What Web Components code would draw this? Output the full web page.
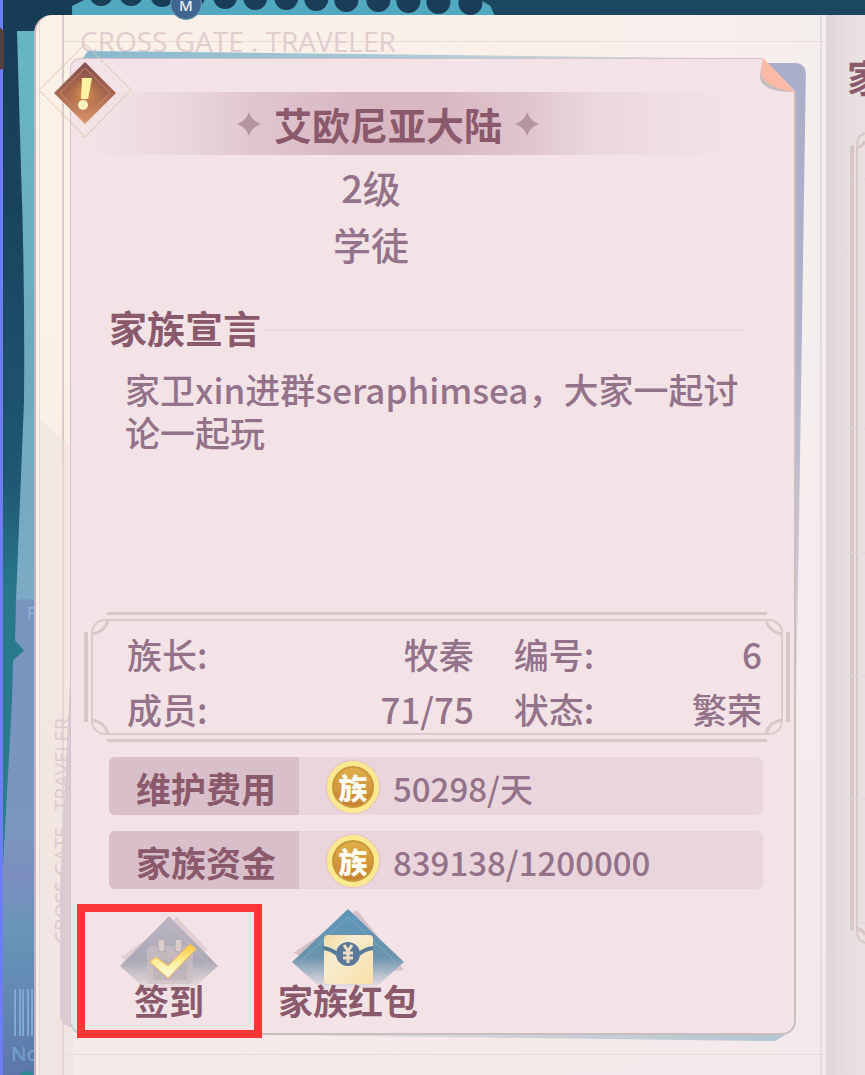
<!DOCTYPE html>
<html lang="zh-CN">
<head>
<meta charset="utf-8">
<meta name="viewport" content="width=device-width, initial-scale=1">
<title>家族</title>
<style>
  html { background: #1a4059; }
  body {
    margin: 0;
    font-family: "Noto Sans CJK SC", "Noto Sans", sans-serif;
    font-weight: 500;
    color: #94738a;
    --strong: #8a5a6c;
    --line: #dccaca;
    --paper: #f3e3e6;
  }
</style>
</head>
<body>
<guild-page>
  <side-page slot="side">家</side-page>
  <guild-card>
    <title-band slot="title">艾欧尼亚大陆</title-band>
    <span slot="rank">2级</span>
    <span slot="rank">学徒</span>
    <guild-motto heading="家族宣言">家卫xin进群seraphimsea，大家一起讨论一起玩</guild-motto>
    <ornate-frame>
      <fact-list></fact-list>
    </ornate-frame>
    <money-row label="维护费用">50298/天</money-row>
    <money-row label="家族资金">839138/1200000</money-row>
    <guild-action slot="action" marked>
      <svg slot="icon" width="116" height="80" viewBox="0 0 116 80" aria-hidden="true">
        <defs>
          <linearGradient id="ga" x1="0" y1="0" x2="0" y2="1"><stop offset=".1" stop-color="#b9b3c2"/><stop offset=".6" stop-color="#aaa9b5"/><stop offset="1" stop-color="#f3e3e6"/></linearGradient>
          <linearGradient id="gc" x1="0" y1="0" x2="0" y2="1"><stop offset="0" stop-color="#ffc83a"/><stop offset=".6" stop-color="#fff3a8"/><stop offset="1" stop-color="#fffbe2"/></linearGradient>
        </defs>
        <path d="M66 8 97 41 62 66 9 49Z" fill="#dcc8d0" opacity=".8"/>
        <path d="M58 7 107 57 79 82H37L9 57Z" fill="url(#ga)"/>
        <path d="M58 14 99 56 85 69" fill="none" stroke="#c6c3cf" opacity=".6"/>
        <rect x="36" y="37" width="46" height="38" rx="5" fill="#cdbfc1" opacity=".7"/>
        <rect x="42" y="51" width="34" height="20" fill="#b6adb6" opacity=".6"/>
        <rect x="47" y="30" width="7" height="13" rx="3" fill="#d9ccc9" stroke="#aaa8b0"/>
        <rect x="64" y="30" width="7" height="13" rx="3" fill="#d9ccc9" stroke="#aaa8b0"/>
        <path d="M39 53 45 48 57 57 79 35 85 40 57 69Z" fill="url(#gc)" stroke="#f9b64c" stroke-width="1"/>
      </svg>
      签到
    </guild-action>
    <guild-action slot="action">
      <svg slot="icon" width="116" height="80" viewBox="0 0 116 80" aria-hidden="true">
        <defs>
          <linearGradient id="gb" x1="0" y1="0" x2="0" y2="1"><stop offset="0" stop-color="#5d97bb"/><stop offset=".6" stop-color="#6a93ad"/><stop offset="1" stop-color="#f3e3e6"/></linearGradient>
          <linearGradient id="ge" x1="0" y1="0" x2="1" y2="1"><stop offset="0" stop-color="#f0dca0"/><stop offset=".35" stop-color="#f8ecd0"/><stop offset="1" stop-color="#f7dfa6"/></linearGradient>
        </defs>
        <path d="M67 1 114 61 60 66 3 44Z" fill="#cfb4bf" opacity=".75"/>
        <path d="M58 0 114 53 84 80H32L2 53Z" fill="url(#gb)"/>
        <path d="M58 8 106 53 94 64M58 8 10 53 22 64" fill="none" stroke="#8db4c9" opacity=".7"/>
        <rect x="34" y="26" width="49" height="49" rx="4" fill="url(#ge)"/>
        <path d="M33 39Q41 40 47 45M83 39Q75 40 69 45" fill="none" stroke="#557b98" stroke-width="4"/>
        <circle cx="58" cy="45" r="12" fill="#58799a"/>
        <path d="M54 36 58 42 62 36M53 44H63M53 49H63M58 42V54" fill="none" stroke="#efdcc2" stroke-width="3"/>
      </svg>
      家族红包
    </guild-action>
  </guild-card>
</guild-page>

<script>
const define = (name, html, setup) => {
  const tpl = document.createElement('template');
  tpl.innerHTML = html;
  customElements.define(name, class extends HTMLElement {
    constructor() {
      super();
      this.attachShadow({ mode: 'open' }).append(tpl.content.cloneNode(true));
    }
    connectedCallback() { if (setup) setup(this, this.shadowRoot); }
  });
};

/* Sea-coloured backdrop with the ticket edges */
const bites = [[101,5],[131,5],[162,6],[193,7],[225,8],[255,9],[286,9],[316,10],[346,11],[378,11],[408,12],[438,13],[470,14]]
  .map(([x, b]) => `<circle cx="${x}" cy="${b - 11}" r="12" fill="#1a3e58"/>`).join('');
define('scene-backdrop', `
<style>
  :host { display: block; overflow: hidden; }
  svg { display: block; width: 100%; height: 100%; }
  text { font-family: "Noto Sans", sans-serif; }
</style>
<svg viewBox="0 0 865 1075" preserveAspectRatio="xMinYMin slice" aria-hidden="true">
  <defs>
    <linearGradient id="sea" x1="0" y1="0" x2="0" y2="1"><stop offset="0" stop-color="#173b55"/><stop offset=".2" stop-color="#19445f"/><stop offset=".45" stop-color="#1f5874"/><stop offset=".55" stop-color="#28788a"/><stop offset="1" stop-color="#2b8290"/></linearGradient>
    <linearGradient id="tic" x1="0" y1="0" x2="0" y2="1"><stop offset="0" stop-color="#66b7c2"/><stop offset=".6" stop-color="#6fa9bf"/><stop offset="1" stop-color="#7cabc5"/></linearGradient>
    <linearGradient id="low" x1="0" y1="0" x2="0" y2="1"><stop offset="0" stop-color="#7894bf"/><stop offset=".5" stop-color="#7a95be"/><stop offset=".58" stop-color="#7c8fbf"/><stop offset=".7" stop-color="#6796b9"/><stop offset="1" stop-color="#5c76aa"/></linearGradient>
  </defs>
  <rect width="865" height="1075" fill="url(#sea)"/>
  <rect x="480" width="385" height="15" fill="#1c4760"/>
  <path d="M72 15V6L84 0H480L490 6 494 15Z" fill="#51a9bf"/>
  ${bites}
  <path d="M17 31H40V600H16Q20 500 24 400Q25 280 21 170Z" fill="url(#tic)"/>
  <path d="M16 599H40V1075H3V865L12 700 13 660 24 650 15 640Z" fill="url(#low)"/>
  <text x="27" y="618" font-size="16" fill="#8fb4d2">F</text>
  <path d="M15 988V1035M20 988V1035M23 988V1035M28 988V1035M32 988V1035" stroke="#7fabd0" stroke-width="2"/>
  <text x="11" y="1060" font-size="20" fill="#739fc7">No</text>
  <circle cx="26" cy="1078" r="8" fill="#2d8994"/>
  <rect width="3" height="1075" fill="#6c7df6"/>
  <path d="M0 27 4 32V68L0 70Z" fill="#54413f"/>
</svg>`);

define('guild-page', `
<style>
  :host { display: block; position: relative; min-height: 100vh; overflow: hidden; box-sizing: border-box; padding: 15px 0 0 34px; }
  scene-backdrop { position: absolute; inset: 0; }
  .badge {
    position: absolute; z-index: 2; left: 170px; top: -12px; box-sizing: border-box; width: 32px; height: 32px; padding-top: 10px;
    border: 1px solid #6fa0b8; border-radius: 50%;
    background: #40658f; color: #eef3f8; font: 500 15px/12px "Noto Sans", sans-serif; text-align: center;
  }
  .spread { position: relative; display: grid; grid-template-columns: minmax(0, 1fr) 39px; min-height: calc(100vh - 15px); }
  main {
    position: relative; display: flow-root; box-sizing: border-box; padding: 0 30px 41px 34px;
    border-left: 2px solid #cbb4b9; border-radius: 18px 0 0 0;
    background:
      linear-gradient(#e6d9dc, #e6d9dc) 3px 0 / 1px 100% no-repeat,
      linear-gradient(#d9cacb, #d9cacb) 26px 0 / 2px 100% no-repeat,
      linear-gradient(#e6dbe4, #e6dbe4) right 4px top 0 / 2px 100% no-repeat,
      linear-gradient(#e9ddd9, #e9ddd9) 28px 26px / 100% 1px no-repeat,
      linear-gradient(#e8dad9, #e8dad9) 28px 1039px / 100% 1px no-repeat,
      linear-gradient(#f2e6ea00 30%, #f2e6ea99),
      linear-gradient(to right, #fcf1e7 0, #faf0ea 60%, #f5eeee 100%);
  }
  main::before {
    content: ""; position: absolute; left: 4px; top: 405px; bottom: 0; width: 33px;
    background: #ecdfdd; opacity: .5; clip-path: polygon(0 0, 100% 28px, 100% 100%, 0 100%);
  }
  .brand {
    margin: 0; padding: 8px 0 0 10px; height: 35px; color: #e0cdd0;
    font: 400 28px/36px "Open Sans", "Noto Sans", sans-serif; white-space: nowrap;
  }
  .spine {
    position: absolute; left: 16px; bottom: 132px; margin: 0; color: #dccbcc; writing-mode: vertical-rl; transform: rotate(180deg);
    font: 400 20px/20px "Open Sans", "Noto Sans", sans-serif; white-space: nowrap;
  }
</style>
<scene-backdrop></scene-backdrop>
<span class="badge">M</span>
<div class="spread">
  <main>
    <p class="brand">CROSS GATE . TRAVELER</p>
    <p class="spine">CROSS GATE . TRAVELER</p>
    <slot></slot>
  </main>
  <slot name="side"></slot>
</div>`);

define('side-page', `
<style>
  :host { display: block; overflow: hidden; padding: 33px 0 0 21px; box-sizing: border-box; white-space: nowrap;
    background: linear-gradient(to right, #dfd6dc, #e9e0e2 70%); }
  h2 { margin: 0; font-size: 38px; line-height: 56px; font-weight: 700; color: var(--strong); }
  svg { display: block; margin: 26px 0 0 1px; }
</style>
<h2><slot></slot></h2>
<svg width="17" height="820" viewBox="0 0 17 820" fill="none" aria-hidden="true">
  <path d="M3 17H4V799H3" stroke="#d8c5c6" stroke-width="4"/>
  <path d="M9 803V16Q9 4 18 3M9 803Q10 811 17 813" stroke="#d8c8c8" stroke-width="2"/>
  <path d="M9 18Q15 16 17 11M9 798Q15 800 17 805" stroke="#d8c5c6" stroke-width="3"/>
  <path d="M0 49H17M0 174H17M0 299H17M0 423H17M0 546H17M0 669H17M0 793H17" stroke="#dcd6db"/>
</svg>`);

define('guild-card', `
<style>
  :host { display: block; position: relative; }
  .shade { position: absolute; left: -10px; top: 500px; bottom: 8px; width: 16px; border-radius: 0 0 0 12px; background: #dacbd3; clip-path: polygon(100% 0, 100% 100%, 0 100%, 0 70%); }
  .blue { position: absolute; right: -10px; top: 5px; width: 50px; height: 660px; background: linear-gradient(#abaec8, #adb1ca 40%, #c9c5d6 75%, #f0e6eb); border-radius: 10px 10px 0 0; clip-path: polygon(0 0, 100% 0, 80% 100%, 0 100%); }
  .top { position: absolute; left: 12px; top: -7px; right: 90px; height: 14px; background: linear-gradient(to right, #8ab8cd, #a8c8d5 50%, #e0dcd8); clip-path: polygon(0 8px, 6px 0, 30% 2px, 100% 7px, 100% 100%, 0 100%); }
  .foot { position: absolute; right: 11px; bottom: -6px; width: 520px; height: 12px; background: linear-gradient(to right, #e8dee1, #b2c5d0); clip-path: polygon(0 50%, 100% 0, 100% 50%, 98% 100%); }
  article {
    position: relative; box-sizing: border-box; padding: 33px 31px 13px 38px;
    background: var(--paper); border: 1px solid #d3c2cd; border-right: 2px solid #cdbfc0; border-bottom: 2px solid #c9bdbd; border-radius: 10px 0 14px 14px;
    clip-path: polygon(0 0, calc(100% - 34px) 0, 100% 34px, 100% calc(100% + 20px), 0 calc(100% + 20px));
  }
  .fold { position: absolute; right: 0; top: 0; }
  .bang { position: absolute; left: -33px; top: -15px; width: 96px; height: 96px; padding: 0; border: 0; background: none; }
  .rank { display: flex; flex-direction: column; align-items: center; margin: 3px 0 27px; padding-right: 130px; font-size: 38px; line-height: 57px; }
  .actions { display: flex; gap: 9px; margin: 20px 0 0 -25px; }
</style>
<div class="blue"></div><div class="top"></div><div class="foot"></div><div class="shade"></div>
<article>
  <slot name="title"></slot>
  <div class="rank"><slot name="rank"></slot></div>
  <slot></slot>
  <div class="actions"><slot name="action"></slot></div>
</article>
<svg class="fold" width="37" height="36" viewBox="0 0 37 36" aria-hidden="true">
  <path d="M3 8Q-1 20 3 25Q10 34 34 34Z" fill="#c6bdbd"/>
  <path d="M4 0Q20 16 36 34Q10 30 3 19Q1 12 4 0Z" fill="#fcb9a5"/>
</svg>
<button class="bang" aria-label="说明">
  <svg width="96" height="96" viewBox="0 0 96 96" aria-hidden="true">
    <defs><linearGradient id="br" x1="0" y1="0" x2="0" y2="1"><stop offset="0" stop-color="#84504e"/><stop offset=".5" stop-color="#a5674f"/><stop offset="1" stop-color="#dc9468"/></linearGradient>
    <radialGradient id="gl"><stop offset="0" stop-color="#f0a94e" stop-opacity=".8"/><stop offset="1" stop-color="#c0703f" stop-opacity="0"/></radialGradient></defs>
    <path d="M48 1 94 47 48 94 2 47Z" fill="none" stroke="#d8c8ad"/>
    <path d="M48 19 79 50 48 81 17 50Z" fill="url(#br)"/>
    <path d="M48 25 73 50 48 75 23 50Z" fill="none" stroke="#c9876a"/>
    <circle cx="48" cy="50" r="19" fill="url(#gl)"/>
    <path d="M45 35H55L51 56H44Z" fill="#fff3a4"/>
    <circle cx="46" cy="62" r="5" fill="#fff0c0"/>
  </svg>
</button>`);

define('title-band', `
<style>
  :host { display: flex; align-items: center; justify-content: center; gap: 13px; height: 63px; margin: 0 0 0 -38px; padding-right: 58px;
    background: linear-gradient(to right, #f3e3e6 2%, #ebd8df 15%, #e0c5cf 27%, #d8b6c2 42%, #d8b6c2 52%, #e0c5cf 66%, #ebd8de 76%, #f3e3e6 96%); }
  h1 { margin: 0; font-size: 38px; line-height: 63px; font-weight: 700; color: var(--strong); }
  svg { flex: none; }
</style>
<svg width="24" height="24" viewBox="0 0 24 24" aria-hidden="true"><path d="M12 0Q15 9 24 12Q15 15 12 24Q9 15 0 12Q9 9 12 0Z" fill="#b595a2"/></svg>
<h1><slot></slot></h1>
<svg width="24" height="24" viewBox="0 0 24 24" aria-hidden="true"><path d="M12 0Q15 9 24 12Q15 15 12 24Q9 15 0 12Q9 9 12 0Z" fill="#b595a2"/></svg>`);

define('guild-motto', `
<style>
  :host { display: block; min-height: 312px; }
  header { display: flex; align-items: center; gap: 2px; }
  h2 { margin: 0; font-size: 38px; line-height: 56px; font-weight: 700; color: var(--strong); }
  i { flex: 1; height: 2px; margin: 6px 20px 0 0; background: #ecd9de; }
  p { margin: 12px 16px 0; font-size: 35px; line-height: 43px; }
</style>
<header><h2></h2><i></i></header>
<p><slot></slot></p>`, (el, root) => { root.querySelector('h2').textContent = el.getAttribute('heading'); });

define('ornate-frame', `
<style>
  :host { display: block; position: relative; margin: 1px -27px 15px -25px; padding: 14px 28px 6px 43px; }
  .inner { position: absolute; inset: 7px; border: 2px solid var(--line); border-radius: 14px; }
  .h, .v { position: absolute; background: #d9c6c7; }
  .h { left: 23px; right: 23px; height: 3px; }
  .v { top: 20px; bottom: 20px; width: 4px; }
  svg { position: absolute; fill: none; stroke: #d9c8c9; stroke-width: 3; }
</style>
<div class="inner"></div>
<div class="h" style="top:0"></div><div class="h" style="bottom:0"></div>
<div class="v" style="left:0"></div><div class="v" style="right:0"></div>
<svg style="left:7px;top:7px" width="18" height="18"><path d="M1 15Q14 13 17 1"/></svg>
<svg style="right:7px;top:7px" width="18" height="18"><path d="M17 15Q4 13 1 1"/></svg>
<svg style="left:7px;bottom:7px" width="18" height="18"><path d="M1 3Q14 5 17 17"/></svg>
<svg style="right:7px;bottom:7px" width="18" height="18"><path d="M17 3Q4 5 1 17"/></svg>
<slot></slot>`);

define('fact-list', `
<style>
  :host { display: block; position: relative; }
  dl { display: grid; grid-template-columns: 348fr 249fr; column-gap: 40px; margin: 0; font-size: 35px; line-height: 55px; }
  div { display: flex; justify-content: space-between; }
  dd { margin: 0; }
</style>
<dl>
  <div><dt>族长:</dt><dd>牧秦</dd></div>
  <div><dt>编号:</dt><dd>6</dd></div>
  <div><dt>成员:</dt><dd>71/75</dd></div>
  <div><dt>状态:</dt><dd>繁荣</dd></div>
</dl>`);

define('money-row', `
<style>
  :host { display: flex; align-items: center; height: 58px; margin-bottom: 16px; border-radius: 6px; overflow: hidden; background: #ead5dc; font-size: 33px; line-height: 58px; }
  b { width: 190px; flex: none; height: 58px; padding: 3px 0 0 4px; box-sizing: border-box; text-align: center; font-size: 35px; line-height: 55px; font-weight: 700; color: var(--strong); background: #d9bfca; }
  .coin {
    display: grid; place-items: center; flex: none; box-sizing: border-box; width: 52px; height: 52px; margin: 2px 14px 0 28px;
    border: 5px solid #fae98f; border-radius: 50%; box-shadow: inset 0 0 0 2px #c99738, 0 0 2px #d49b6a;
    background: linear-gradient(#e0b24c, #c8802f); color: #fffdf2; font-size: 29px; line-height: 40px; font-weight: 900;
  }
  .value { padding-top: 4px; }
</style>
<b></b><span class="coin">族</span><span class="value"><slot></slot></span>`,
(el, root) => { root.querySelector('b').textContent = el.getAttribute('label'); });

define('guild-action', `
<style>
  :host { display: block; position: relative; }
  button { display: flex; flex-direction: column; align-items: center; width: 170px; padding: 0; border: 0; background: none; font: 700 35px/40px "Noto Sans CJK SC", sans-serif; color: var(--strong); white-space: nowrap; }
  span { margin-top: -9px; position: relative; }
  ::slotted(svg) { display: block; }
  :host([marked])::after { content: ""; position: absolute; left: -7px; top: -5px; width: 185px; height: 134px; box-sizing: border-box; border: 8px solid #fb3637; pointer-events: none; }
</style>
<button><slot name="icon"></slot><span><slot></slot></span></button>`);
</script>
</body>
</html>
